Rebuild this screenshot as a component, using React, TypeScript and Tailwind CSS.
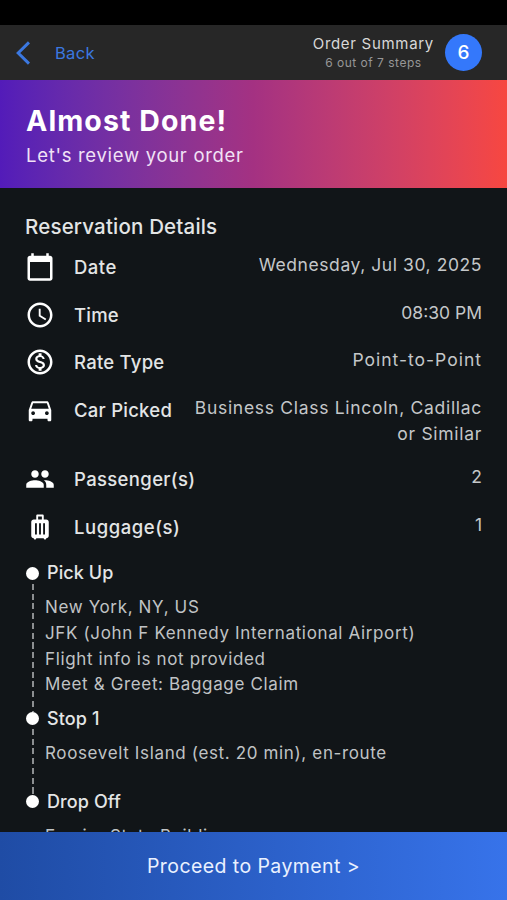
import type { ReactNode } from "react";
import {
  MdAccessTime,
  MdCalendarToday,
  MdDirectionsCar,
  MdLuggage,
  MdOutlineMonetizationOn,
  MdPeople,
} from "react-icons/md";
import type { IconType } from "react-icons";

interface DetailRow {
  icon: IconType;
  label: string;
  labelClass: string;
  value: ReactNode;
  valueClass: string;
}

const details: DetailRow[] = [
  { icon: MdCalendarToday, label: "Date", labelClass: "tracking-[0.5px]", value: "Wednesday, Jul 30, 2025", valueClass: "tracking-[0.57px]" },
  { icon: MdAccessTime, label: "Time", labelClass: "tracking-[0.2px]", value: "08:30 PM", valueClass: "tracking-[0px]" },
  { icon: MdOutlineMonetizationOn, label: "Rate Type", labelClass: "tracking-[0.25px]", value: "Point-to-Point", valueClass: "tracking-[1px]" },
  {
    icon: MdDirectionsCar,
    label: "Car Picked",
    labelClass: "tracking-[0.25px]",
    value: (
      <>
        Business Class Lincoln, Cadillac
        <br />
        or Similar
      </>
    ),
    valueClass: "tracking-[0.7px]",
  },
  { icon: MdPeople, label: "Passenger(s)", labelClass: "tracking-[0.35px]", value: "2", valueClass: "" },
  { icon: MdLuggage, label: "Luggage(s)", labelClass: "tracking-[0.55px]", value: "1", valueClass: "" },
];

interface Stop {
  title: string;
  lines: string[];
  height: string;
}

const stops: Stop[] = [
  {
    title: "Pick Up",
    lines: [
      "New York, NY, US",
      "JFK (John F Kennedy International Airport)",
      "Flight info is not provided",
      "Meet & Greet: Baggage Claim",
    ],
    height: "h-[145.5px]",
  },
  { title: "Stop 1", lines: ["Roosevelt Island (est. 20 min), en-route"], height: "h-[83px]" },
  { title: "Drop Off", lines: ["Empire State Building"], height: "h-[83px]" },
];

function Header() {
  return (
    <header className="flex h-[55px] shrink-0 items-center justify-between bg-[#272727] pl-4 pr-[25px]">
      <button className="flex items-center pt-px text-[#3b78e0]">
        <svg width="14" height="24" viewBox="0 0 14 24" fill="none" stroke="currentColor" strokeWidth="3">
          <path d="M13 1.4 2.2 12 13 22.6" />
        </svg>
        <span className="ml-[25px] text-[16.5px] tracking-[0.3px]">Back</span>
      </button>
      <div className="flex items-center">
        <div className="pt-px text-center">
          <p className="text-[15px] leading-[19px] tracking-[0.7px] whitespace-nowrap text-[#d8d8d8]">Order Summary</p>
          <p className="text-[12px] leading-[19px] tracking-[0.5px] text-[#979797]">6 out of 7 steps</p>
        </div>
        <div className="ml-[11px] flex size-[37px] items-center justify-center rounded-full bg-[#3478fb] pt-px text-[19px] font-medium text-white">
          6
        </div>
      </div>
    </header>
  );
}

function Banner() {
  return (
    <section className="h-[107.5px] shrink-0 bg-linear-to-r from-[#531bb9] via-[#a43182] to-[#f74740] pl-[26px] pt-[22px] text-white">
      <h1 className="text-[28.5px] leading-[38px] font-bold tracking-[1.1px]">Almost Done!</h1>
      <p className="text-[18.5px] leading-[31px] tracking-[0.7px] text-[#f1e2f6]">Let's review your order</p>
    </section>
  );
}

function Details() {
  return (
    <div className="mt-[11.4px] flex flex-col gap-[17.7px]">
      {details.map(({ icon: Icon, label, labelClass, value, valueClass }) => (
        <div key={label} className="flex items-start">
          <Icon className="size-[30px] shrink-0 text-white" />
          <span className={`ml-[19px] text-[18.5px] leading-[30px] font-medium whitespace-nowrap text-[#e3e5e6] ${labelClass}`}>
            {label}
          </span>
          <span className={`ml-auto text-right text-[17.5px] leading-[25.7px] whitespace-nowrap text-[#c4c7c9] ${valueClass}`}>
            {value}
          </span>
        </div>
      ))}
    </div>
  );
}

function Timeline() {
  return (
    <div className="mt-[17px]">
      {stops.map((stop, i) => (
        <div key={stop.title} className={`flex ${stop.height}`}>
          <div className="flex w-[15px] shrink-0 flex-col items-center pt-[8px]">
            <span className="size-[13px] shrink-0 rounded-full bg-white" />
            {i < stops.length - 1 && (
              <span className="-mb-2 mt-[4px] w-[2px] flex-1 bg-[repeating-linear-gradient(to_bottom,#8c8f91_0_6px,transparent_6px_9.75px)]" />
            )}
          </div>
          <div>
            <h3 className="ml-[7px] pt-[0.7px] text-[18px] leading-[28px] font-medium tracking-[0.1px] text-[#e3e5e6]">{stop.title}</h3>
            <div className="ml-[5px] mt-[7.9px] text-[17px] leading-[25.7px] tracking-[0.64px] whitespace-nowrap text-[#c0c3c5]">
              {stop.lines.map((line) => (
                <p key={line}>{line}</p>
              ))}
            </div>
          </div>
        </div>
      ))}
    </div>
  );
}

export default function App() {
  return (
    <div className="flex h-[900px] w-full flex-col overflow-hidden bg-[#111518] font-['Inter',sans-serif]">
      <div className="h-[25px] shrink-0 bg-black" />
      <Header />
      <Banner />
      <main className="min-h-0 flex-1 overflow-hidden px-[25px] pt-[24px]">
        <h2 className="text-[20.5px] leading-[29px] font-medium tracking-[0.18px] text-[#e3e5e6]">Reservation Details</h2>
        <Details />
        <Timeline />
      </main>
      <button className="h-[68.5px] shrink-0 bg-linear-to-r from-[#1f4ca5] to-[#3773ea] pt-px text-[19.5px] tracking-[0.42px] text-[#eaf1ff]">
        Proceed to Payment &gt;
      </button>
    </div>
  );
}
